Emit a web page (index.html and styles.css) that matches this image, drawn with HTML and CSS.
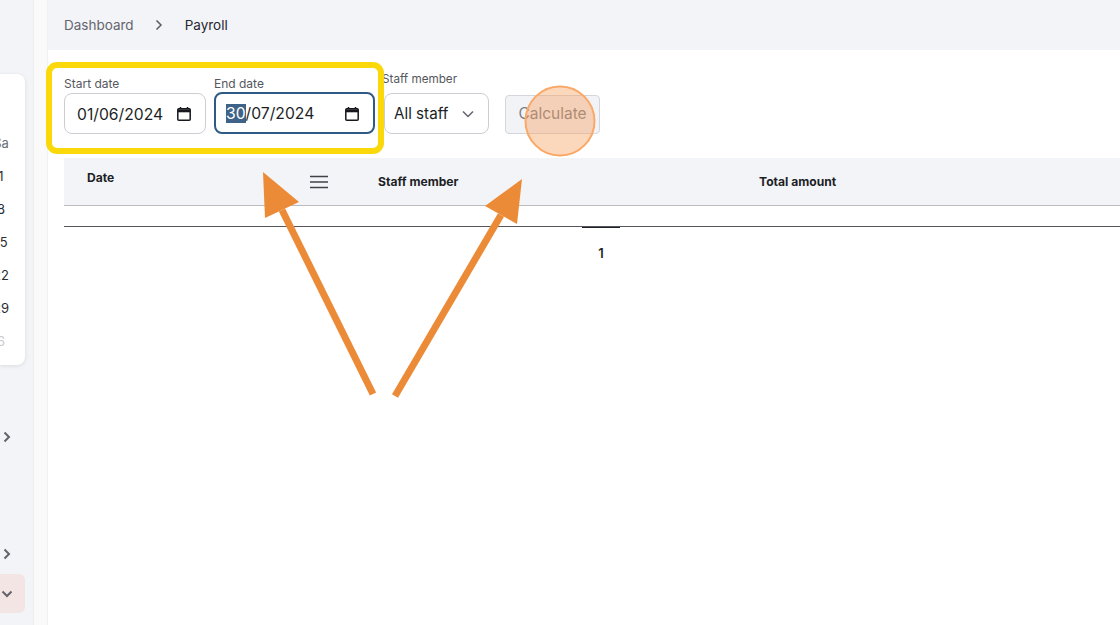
FILE: index.html
```html
<!DOCTYPE html>
<html lang="en">
<head>
    <meta charset="UTF-8">
    <meta name="viewport" content="width=device-width, initial-scale=1.0">
    <title>Payroll</title>
    <link rel="stylesheet" href="styles.css">
</head>
<body>

    <!-- Sidebar, cut off by the left edge of the capture -->
    <aside class="sidebar">
        <div class="calendar-card">
            <div class="cal-cell cal-head">Sa</div>
            <div class="cal-cell">1</div>
            <div class="cal-cell">8</div>
            <div class="cal-cell">15</div>
            <div class="cal-cell">22</div>
            <div class="cal-cell">29</div>
            <div class="cal-cell cal-muted">6</div>
        </div>
        <div class="side-arrow side-arrow-first">
            <svg width="10" height="12" viewBox="0 0 10 12"><path d="M2.5 1.5 7 6l-4.5 4.5" class="chev"/></svg>
        </div>
        <div class="side-arrow side-arrow-second">
            <svg width="10" height="12" viewBox="0 0 10 12"><path d="M2.5 1.5 7 6l-4.5 4.5" class="chev"/></svg>
        </div>
        <div class="side-active">
            <svg width="12" height="10" viewBox="0 0 12 10"><path d="M1.5 2.5 6 7l4.5-4.5" class="chev"/></svg>
        </div>
    </aside>

    <div class="gutter"></div>

    <div class="main">
        <!-- Breadcrumb -->
        <div class="topbar">
            <span class="crumb">Dashboard</span>
            <svg class="crumb-sep" width="10" height="12" viewBox="0 0 10 12"><path d="M2.5 1.5 7 6l-4.5 4.5"/></svg>
            <span class="crumb-current">Payroll</span>
        </div>

        <!-- Filters -->
        <div class="filters">
            <div class="field">
                <div class="field-label">Start date</div>
                <div class="input date-input date-start">
                    <span>01/06/2024</span>
                    <svg class="cal-icon" width="16" height="16" viewBox="0 0 16 16"><path d="M4.5 1v2M11.5 1v2"/><rect x="1.8" y="2.8" width="12.4" height="11.4" rx="1"/><path d="M1.8 4.8h12.4" class="cal-bar"/></svg>
                </div>
            </div>
            <div class="field">
                <div class="field-label">End date</div>
                <div class="input date-input date-end">
                    <span><span class="selected">30</span>/07/2024</span>
                    <svg class="cal-icon" width="16" height="16" viewBox="0 0 16 16"><path d="M4.5 1v2M11.5 1v2"/><rect x="1.8" y="2.8" width="12.4" height="11.4" rx="1"/><path d="M1.8 4.8h12.4" class="cal-bar"/></svg>
                </div>
            </div>
            <div class="field field-staff">
                <div class="field-label">Staff member</div>
                <div class="input staff-input">
                    <span>All staff</span>
                    <svg class="select-chev" width="12" height="8" viewBox="0 0 12 8"><path d="M1 1.5 6 6.500l5-5"/></svg>
                </div>
            </div>
            <button class="calc-button">Calculate</button>
        </div>

        <!-- Table -->
        <div class="table-head">
            <div class="th th-date">Date</div>
            <svg class="th-menu" width="18" height="14" viewBox="0 0 18 14"><path d="M0 1.5h18M0 7h18M0 12.5h18"/></svg>
            <div class="th th-staff">Staff member</div>
            <div class="th th-total">Total amount</div>
        </div>
        <div class="table-empty"></div>
        <div class="pager"><span class="page-num">1</span></div>
    </div>

    <!-- Annotations drawn over the screenshot -->
    <svg class="annotations" width="1120" height="625" viewBox="0 0 1120 625">
        <rect x="49" y="65" width="332" height="86" rx="8" fill="none" stroke="#fbd80a" stroke-width="6"/>
        <circle cx="560" cy="121" r="34.5" fill="#f5a05f" fill-opacity="0.42" stroke="#fba866" stroke-width="2"/>
        <path d="M373 394 282 210" stroke="#ec8b37" stroke-width="7" fill="none"/>
        <polygon points="263,172 299,202 265,218" fill="#ec8b37"/>
        <path d="M395 396 501 215" stroke="#ec8b37" stroke-width="7" fill="none"/>
        <polygon points="522,179 485,206 517,224" fill="#ec8b37"/>
    </svg>

</body>
</html>
```

FILE: styles.css
```css
/* Page frame */
body {
    margin: 0;
    display: flex;
    height: 625px;
    overflow: hidden;
    font-family: Inter, "Noto Sans", sans-serif;
    background-color: #fff;
    color: #1d1f26;
}

/* Left sidebar */
.sidebar {
    flex: 0 0 33px;
    padding-top: 74px;
    background-color: #f3f4f8;
    border-right: 1px solid #eceded;
}

.calendar-card {
    width: 25px;
    height: 291px;
    padding-top: 53px;
    box-sizing: border-box;
    background-color: #fff;
    border-radius: 0 8px 8px 0;
    box-shadow: 0px 1px 4px rgba(0, 0, 0, 0.1);
    overflow: hidden;
}

/* Calendar column is centred near the window edge, so half of it is cut off */
.cal-cell {
    width: 50px;
    margin-left: -24px;
    height: 33px;
    line-height: 33px;
    font-size: 13px;
    text-align: center;
    color: #2b2d33;
}

.cal-head {
    color: #6c6e75;
}

.cal-muted {
    color: #c9cacd;
}

.chev {
    fill: none;
    stroke: #62646c;
    stroke-width: 2;
}

.side-arrow {
    height: 12px;
    padding-left: 2px;
}

.side-arrow svg {
    display: block;
}

.side-arrow-first {
    margin-top: 66px;
}

.side-arrow-second {
    margin-top: 105px;
}

.side-active {
    width: 25px;
    height: 39px;
    margin-top: 14px;
    padding-left: 1px;
    box-sizing: border-box;
    display: flex;
    align-items: center;
    background-color: #f4e5e5;
    border-radius: 0 6px 6px 0;
}

/* Strip between sidebar and content */
.gutter {
    flex: 0 0 13px;
    background-color: #fafafa;
    border-right: 1px solid #f1f1f2;
}

.main {
    flex: 1;
    min-width: 0;
}

/* Breadcrumb bar */
.topbar {
    height: 50px;
    padding-left: 16px;
    display: flex;
    align-items: center;
    background-color: #f3f4f8;
    font-size: 13.5px;
}

.crumb {
    color: #63656d;
}

.crumb-sep {
    margin: 0 21px 0 20px;
}

.crumb-sep path {
    fill: none;
    stroke: #5b5d65;
    stroke-width: 1.5;
}

.crumb-current {
    color: #26282f;
}

/* Filter row */
.filters {
    height: 108px;
    padding-left: 16px;
    display: flex;
}

.field {
    margin-right: 8px;
    padding-top: 27px;
}

.field-label {
    height: 16px;
    line-height: 14px;
    font-size: 12px;
    color: #55575e;
}

.input {
    display: flex;
    align-items: center;
    justify-content: space-between;
    box-sizing: border-box;
    background-color: #fff;
    border: 1px solid #ccced3;
    border-radius: 8px;
    font-size: 15.7px;
    color: #1d1f26;
}

.date-input {
    height: 41px;
    padding: 1px 13px 0 12px;
}

.date-start {
    width: 142px;
}

.date-end {
    width: 161px;
    height: 42px;
    margin-top: -1px;
    border: 2px solid #2f5a86;
    padding: 1px 13px 0 10px;
}

.selected {
    background-color: #3f6388;
    color: #fff;
}

.cal-icon {
    fill: none;
    stroke: #16181d;
    stroke-width: 1.5;
}

.cal-bar {
    stroke-width: 3;
}

.field-staff {
    margin-left: 1px;
    margin-right: 16px;
    padding-top: 22px;
}

.field-staff .field-label {
    margin-left: -2px;
    height: 21px;
    font-size: 11.7px;
}

.staff-input {
    width: 105px;
    height: 41px;
    padding: 0 14px 0 9px;
    font-size: 15.2px;
}

.select-chev {
    fill: none;
    stroke: #62646c;
    stroke-width: 1.5;
}

.calc-button {
    align-self: flex-start;
    width: 95px;
    height: 39px;
    margin-top: 45px;
    padding: 0 0 3px;
    font-family: inherit;
    font-size: 15.5px;
    color: #7b7d85;
    background-color: #f2f3f7;
    border: 1px solid #d4d6db;
    border-radius: 4px;
}

/* Table */
.table-head {
    height: 47px;
    margin-left: 16px;
    display: flex;
    background-color: #f3f4f8;
    border-bottom: 1px solid #b9bbbf;
}

.th {
    font-size: 12.1px;
    font-weight: 700;
    line-height: 14px;
    color: #1d1f26;
}

.th-date {
    width: 223px;
    padding: 13px 0 0 23px;
}

.th-menu {
    margin-top: 17px;
    fill: none;
    stroke: #3f4147;
    stroke-width: 1.6;
}

.th-staff {
    width: 381px;
    padding: 17px 0 0 50px;
}

.th-total {
    padding-top: 17px;
}

.table-empty {
    height: 20px;
    margin-left: 16px;
    border-bottom: 1px solid #55575c;
}

.pager {
    margin-left: 534px;
    width: 38px;
    border-top: 1px solid #1d1f26;
    text-align: center;
    padding-top: 17px;
}

.page-num {
    font-size: 13px;
    font-weight: 600;
    line-height: 16px;
    display: block;
}

/* Annotation layer */
.annotations {
    position: absolute;
    top: 0;
    left: 0;
    pointer-events: none;
}
```
